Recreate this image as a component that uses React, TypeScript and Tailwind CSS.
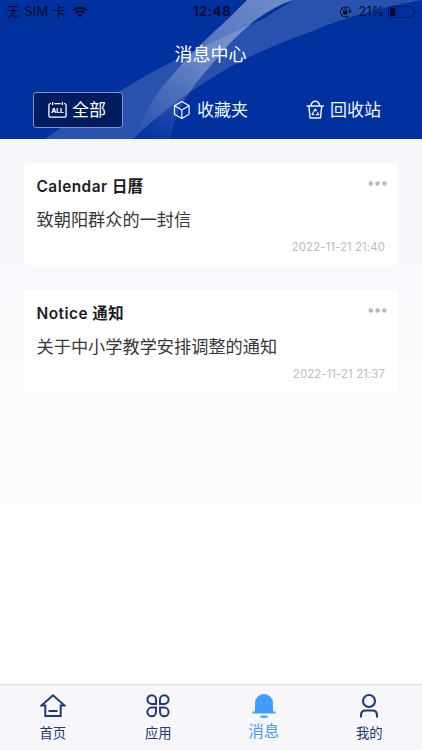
import React from "react";

const statusFont = "font-['Inter','Noto_Sans_CJK_SC',sans-serif]";

function HeaderSwoosh() {
  return (
    <svg className="absolute inset-0 h-full w-full" viewBox="0 0 422 139" preserveAspectRatio="none">
      <defs>
        <linearGradient id="beam" gradientUnits="userSpaceOnUse" x1="265" y1="0" x2="150" y2="139">
          <stop offset="0" stopColor="#fff" stopOpacity="0.42" />
          <stop offset="0.45" stopColor="#fff" stopOpacity="0.32" />
          <stop offset="0.7" stopColor="#fff" stopOpacity="0.17" />
          <stop offset="1" stopColor="#fff" stopOpacity="0.02" />
        </linearGradient>
      </defs>
      <path d="M45 139C70 121 94 106 118 92C155 70 180 57 200 48L230 34L263 19L293 0H422C384 7 348 16 310 32C282 42 256 53 230 67C195 87 162 111 133 139Z" fill="#fff" fillOpacity="0.16" />
      <path d="M247 0L230 17L200 45C179 66 164 84 153 100C146 112 140 124 135 139H170C173 125 177 114 183 103C190 91 197 81 207 70L230 43C243 31 252 22 260 17C270 10 281 4 293 0Z" fill="url(#beam)" />
    </svg>
  );
}

function StatusBar() {
  return (
    <div className={`relative grid h-[23px] grid-cols-3 items-center text-[#020b2b] ${statusFont}`}>
      <div className="flex items-center pl-[7px] text-[13px] leading-[23px]">
        <span className="whitespace-pre tracking-[0.25px]">无 SIM 卡</span>
        <svg className="ml-[6px]" width="16" height="12" viewBox="0 0 16 12" fill="currentColor">
          <path d="M8 11.4 5.7 9.1a3.4 3.4 0 0 1 4.6 0Z" />
          <path d="M1 4.6a10.1 10.1 0 0 1 14 0M3.5 7.1a6.4 6.4 0 0 1 9 0" fill="none" stroke="currentColor" strokeWidth="2.1" />
        </svg>
      </div>
      <div className="pl-[2px] text-center text-[13.5px] font-semibold tracking-[0.4px]">12:48</div>
      <div className="flex items-center justify-end pr-[5px] text-[13px]">
        <svg width="13" height="12" viewBox="0 0 13 12" fill="none" stroke="currentColor">
          <path d="M9.8 2.2A5 5 0 1 0 9.5 10M10.2 2.6A5 5 0 0 1 11 6" strokeWidth="1.1" />
          <path d="m9.2 5 1.9 2 1.7-2Z" fill="currentColor" stroke="none" />
          <rect x="4" y="5" width="4.4" height="3.6" rx=".5" fill="currentColor" stroke="none" />
          <path d="M4.9 5V4a1.3 1.3 0 0 1 2.6 0v1" strokeWidth=".9" />
        </svg>
        <span className="ml-[7px] tracking-[-0.2px]">21%</span>
        <svg className="ml-1" width="29" height="12" viewBox="0 0 29 12">
          <rect x=".5" y=".5" width="25" height="11" rx="2.5" fill="none" stroke="#020b2b" strokeOpacity=".55" />
          <rect x="2" y="2" width="5.5" height="8" rx="1" fill="#020b2b" />
          <path d="M27 4c1 .3 1.5 1 1.5 2S28 7.7 27 8Z" fill="#020b2b" fillOpacity=".6" />
        </svg>
      </div>
    </div>
  );
}

function AllIcon() {
  return (
    <svg width="19" height="18" viewBox="0 0 19 18" fill="none" stroke="currentColor" strokeWidth="1.25">
      <path d="M3 2.700h-.6A1.500 1.500 0 0 0 .9 4.200v10.500a1.500 1.500 0 0 0 1.500 1.500h14.200a1.500 1.500 0 0 0 1.500-1.500V4.200a1.500 1.500 0 0 0-1.500-1.500H16M6.200 2.700h6.600M4.600 1v3M14.400 1v3" />
      <text x="9.500" y="12" textAnchor="middle" fontFamily="Inter" fontSize="6.2" fontWeight="800" fill="currentColor" stroke="none" textLength="12.5" lengthAdjust="spacingAndGlyphs">ALL</text>
    </svg>
  );
}

function BoxIcon() {
  return (
    <svg width="18" height="20" viewBox="0 0 18 20" fill="none" stroke="currentColor" strokeWidth="1.25" strokeLinejoin="round">
      <path d="m8.800 1.500 7.300 4.100v8.700l-7.300 4.200-7.300-4.200V5.600ZM1.500 5.800 8.800 10l7.300-4.200M8.800 10v8.300" />
    </svg>
  );
}

function BinIcon() {
  return (
    <svg width="19" height="20" viewBox="0 0 19 20" fill="none" stroke="currentColor" strokeWidth="1.45" strokeLinejoin="round">
      <path d="M.7 6h17.200M2.900 6l1.200 12h10.400l1.200-12M4.800 5.800C5.500 2.900 7 1.300 9.300 1.300s3.800 1.600 4.500 4.500" />
      <path d="m6 14.500 3.300-5.500 1.300 2.200M11.400 12.200l1.300 2.300h-3M5.700 14.500h2.500" strokeWidth="1.250" />
    </svg>
  );
}

function Header() {
  return (
    <header className="relative h-[139px] shrink-0 overflow-hidden bg-[#00319f]">
      <HeaderSwoosh />
      <StatusBar />
      <h1 className="relative pt-[18px] pr-[1px] text-center text-[18px] leading-[28px] text-white">消息中心</h1>
      <nav className="relative mt-[23px] flex h-9 text-[17px] leading-none text-[#edf3ff]">
        <div className="ml-[33px] flex w-[90px] items-center justify-center rounded-[3px] border border-[#8293bd] bg-[#001c61] pr-[2px] text-white">
          <AllIcon /><span className="ml-[5px]">全部</span>
        </div>
        <div className="ml-[50px] flex items-center">
          <BoxIcon /><span className="ml-1.5">收藏夹</span>
        </div>
        <div className="ml-[58px] flex items-center">
          <BinIcon /><span className="ml-[5px]">回收站</span>
        </div>
      </nav>
    </header>
  );
}

function MessageCard({ title, body, date }: { title: string; body: string; date: string }) {
  return (
    <article className="h-[102px] rounded-[3px] bg-white px-[13px] pt-[11px]">
      <div className="flex justify-between">
        <h2 className="-ml-[0.5px] text-[15.4px] leading-[26px] font-semibold tracking-[0.48px] text-[#1c1c1e]">{title}</h2>
        <svg className="mt-[7px] -mr-[3px]" width="20" height="5" viewBox="0 0 20 5" fill="#b9b9b9">
          <circle cx="2.800" cy="2.500" r="2.300" /><circle cx="9.600" cy="2.500" r="2.300" /><circle cx="16.400" cy="2.500" r="2.300" />
        </svg>
      </div>
      <p className="mt-[7px] -ml-[0.5px] text-[17.2px] leading-[26px] text-[#38383a]">{body}</p>
      <time className="mt-[5px] block text-right text-[11.5px] leading-[18px] tracking-[0.05px] text-[#bdbdbf]">{date}</time>
    </article>
  );
}

function HomeIcon() {
  return (
    <svg width="26" height="26" viewBox="0 0 26 26" fill="none" stroke="currentColor" strokeWidth="2">
      <path d="M1.500 12.400h3.800v10.700h15.400V12.400h3.800L13 2.300ZM8.500 18h9" />
    </svg>
  );
}

function AppsIcon() {
  return (
    <svg width="26" height="26" viewBox="0 0 26 26" fill="none" stroke="currentColor" strokeWidth="2">
      <path d="M11 10.900V6.600a4.300 4.300 0 1 0-4.300 4.300ZM15 10.900V6.600a4.300 4.300 0 1 1 4.300 4.300ZM11 14.600v4.300a4.300 4.300 0 1 1-4.300-4.300ZM15 14.600v4.300a4.300 4.300 0 1 0 4.300-4.300Z" />
    </svg>
  );
}

function BellIcon() {
  return (
    <svg width="26" height="26" viewBox="0 0 26 26" fill="currentColor">
      <path d="M4 18.500V10a9 9 0 0 1 18 0v8.500h2.500v2h-23v-2ZM9.500 22.500h7v2.300h-7Z" />
    </svg>
  );
}

function UserIcon() {
  return (
    <svg width="26" height="26" viewBox="0 0 26 26" fill="none" stroke="currentColor" strokeWidth="2.100">
      <circle cx="13" cy="8" r="6" />
      <path d="M5 24.500v-2.200c0-3 1.700-4.800 4.700-4.800h6.600c3 0 4.700 1.800 4.700 4.800v2.200" />
    </svg>
  );
}

function TabBar() {
  const tabs = [
    { label: "首页", icon: <HomeIcon /> },
    { label: "应用", icon: <AppsIcon /> },
    { label: "消息", icon: <BellIcon />, active: true },
    { label: "我的", icon: <UserIcon /> },
  ];
  return (
    <nav className="grid h-[66px] shrink-0 grid-cols-4 border-t border-[#dedee2] bg-[#f6f6fb]">
      {tabs.map((tab) => (
        <div key={tab.label} className={tab.active ? "flex flex-col items-center pt-[8px] text-[#409cff]" : "flex flex-col items-center pt-[8px] text-[#203a78]"}>
          {tab.icon}
          <span className={tab.active ? "mt-[3px] text-[15.5px] leading-[20px]" : "mt-[5px] text-[13.3px] leading-[18px]"}>{tab.label}</span>
        </div>
      ))}
    </nav>
  );
}

export default function App() {
  return (
    <div className="flex h-[750px] w-[422px] flex-col overflow-hidden font-['Inter','Noto_Sans_CJK_SC',sans-serif]">
      <Header />
      <main className="flex flex-1 flex-col gap-[25px] bg-linear-to-b from-[#f6f6fb] to-white to-90% px-6 pt-6">
        <MessageCard title="Calendar 日曆" body="致朝阳群众的一封信" date="2022-11-21 21:40" />
        <MessageCard title="Notice 通知" body="关于中小学教学安排调整的通知" date="2022-11-21 21:37" />
      </main>
      <TabBar />
    </div>
  );
}
